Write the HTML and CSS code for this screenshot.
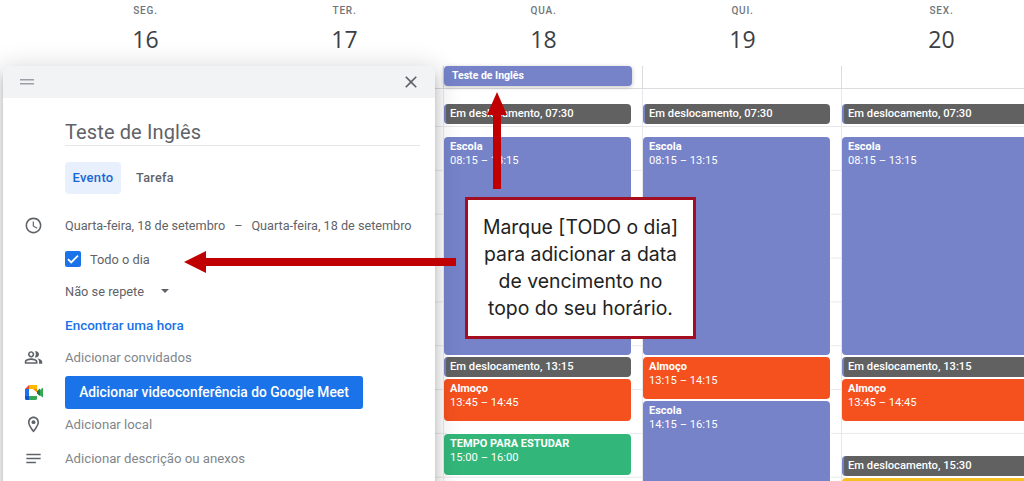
FILE: index.html
```html
<!DOCTYPE html>
<html lang="pt-BR">
<head>
    <meta charset="UTF-8">
    <meta name="viewport" content="width=device-width, initial-scale=1.0">
    <title>Teste de Inglês</title>
    <link rel="stylesheet" href="styles.css">
</head>
<body>
    <div class="calendar">
        <div class="day-heads">
            <div class="day-head"><span class="day-name">SEG.</span><span class="day-num">16</span></div>
            <div class="day-head"><span class="day-name">TER.</span><span class="day-num">17</span></div>
            <div class="day-head"><span class="day-name">QUA.</span><span class="day-num">18</span></div>
            <div class="day-head"><span class="day-name">QUI.</span><span class="day-num">19</span></div>
            <div class="day-head"><span class="day-name">SEX.</span><span class="day-num">20</span></div>
        </div>

        <div class="all-day">
            <div class="all-day-cell"></div>
            <div class="all-day-cell"></div>
            <div class="all-day-cell"><div class="all-day-event">Teste de Inglês</div></div>
            <div class="all-day-cell"></div>
            <div class="all-day-cell"></div>
        </div>

        <div class="week">
            <div class="day"></div>
            <div class="day"></div>
            <div class="day">
                <div class="event travel first">Em deslocamento, 07:30</div>
                <div class="event blue school"><b>Escola</b><span>08:15 – 13:15</span></div>
                <div class="event travel after-school">Em deslocamento, 13:15</div>
                <div class="event orange lunch-long"><b>Almoço</b><span>13:45 – 14:45</span></div>
                <div class="event green study"><b>TEMPO PARA ESTUDAR</b><span>15:00 – 16:00</span></div>
            </div>
            <div class="day">
                <div class="event travel first">Em deslocamento, 07:30</div>
                <div class="event blue school"><b>Escola</b><span>08:15 – 13:15</span></div>
                <div class="event orange lunch-short"><b>Almoço</b><span>13:15 – 14:15</span></div>
                <div class="event blue school-late"><b>Escola</b><span>14:15 – 16:15</span></div>
            </div>
            <div class="day">
                <div class="event travel first">Em deslocamento, 07:30</div>
                <div class="event blue school"><b>Escola</b><span>08:15 – 13:15</span></div>
                <div class="event travel after-school">Em deslocamento, 13:15</div>
                <div class="event orange lunch-long"><b>Almoço</b><span>13:45 – 14:45</span></div>
                <div class="event travel late">Em deslocamento, 15:30</div>
                <div class="event yellow last"></div>
            </div>
        </div>
    </div>

    <div class="dialog">
        <div class="dialog-bar">
            <svg class="drag" viewBox="0 0 14 6"><path d="M0 0h14v1.4H0zM0 4h14v1.4H0z"/></svg>
            <svg class="close" viewBox="0 0 24 24"><path d="M19 6.41L17.59 5 12 10.59 6.41 5 5 6.41 10.59 12 5 17.59 6.41 19 12 13.41 17.59 19 19 17.59 13.41 12z"/></svg>
        </div>
        <div class="dialog-body">
            <div class="title">Teste de Inglês</div>
            <div class="tabs">
                <span class="tab active">Evento</span>
                <span class="tab">Tarefa</span>
            </div>

            <div class="row date-row">
                <svg class="icon" viewBox="0 0 24 24"><path d="M11.99 2C6.47 2 2 6.48 2 12s4.47 10 9.99 10C17.52 22 22 17.52 22 12S17.52 2 11.99 2zM12 20c-4.42 0-8-3.58-8-8s3.58-8 8-8 8 3.58 8 8-3.58 8-8 8zm.5-13H11v6l5.25 3.15.75-1.23-4.5-2.67z"/></svg>
                <span class="row-text dates"><span>Quarta-feira, 18 de setembro</span><span>–</span><span>Quarta-feira, 18 de setembro</span></span>
            </div>
            <div class="row all-day-row">
                <span class="checkbox">
                    <svg viewBox="0 0 16 16"><path d="M3 8.2l3.2 3.2L13 4.6" fill="none" stroke="#fff" stroke-width="1.8"/></svg>
                </span>
                <span class="row-text">Todo o dia</span>
            </div>
            <div class="row">
                <span class="row-text">Não se repete</span>
                <span class="caret"></span>
            </div>
            <div class="row find-row"><span class="row-text link">Encontrar uma hora</span></div>
            <div class="row">
                <svg class="icon" viewBox="0 0 24 24"><path d="M16.67 13.13C18.04 14.06 19 15.32 19 17v3h4v-3c0-2.18-3.57-3.47-6.33-3.87zM15 12c2.21 0 4-1.79 4-4s-1.79-4-4-4c-.47 0-.91.1-1.33.24C14.5 5.27 15 6.58 15 8s-.5 2.73-1.33 3.76c.42.14.86.24 1.33.24zM9 12c2.21 0 4-1.79 4-4s-1.79-4-4-4-4 1.79-4 4 1.79 4 4 4zm0-6c1.1 0 2 .9 2 2s-.9 2-2 2-2-.9-2-2 .9-2 2-2zM9 13c-2.67 0-8 1.34-8 4v3h16v-3c0-2.66-5.33-4-8-4zm6 5H3v-.99C3.2 16.29 6.3 15 9 15s5.8 1.29 6 2v1z"/></svg>
                <span class="row-text muted">Adicionar convidados</span>
            </div>
            <div class="row meet-row">
                <svg class="meet" viewBox="0 0 18 15">
                    <path fill="#ea4335" d="M4 0L0 4h4z"/>
                    <path fill="#ffba00" d="M4 0h8v4H4z"/>
                    <path fill="#ff8a00" d="M8 4h4v3.5z"/>
                    <path fill="#1a73e8" d="M0 4h4v7H0z"/>
                    <path fill="#0b57d0" d="M0 11h4v4H1.5A1.5 1.5 0 0 1 0 13.5z"/>
                    <path fill="#34a853" d="M4 11h8V7.5L18 2.5v10L12 8.5V13.5A1.5 1.5 0 0 1 10.5 15H4z"/>
                    <path fill="#188038" d="M12 6l3-2.5V11l-3-2.5z"/>
                </svg>
                <span class="meet-btn">Adicionar videoconferência do Google Meet</span>
            </div>
            <div class="row local-row">
                <svg class="icon" viewBox="0 0 24 24"><path d="M12 2C8.13 2 5 5.13 5 9c0 5.25 7 13 7 13s7-7.75 7-13c0-3.87-3.13-7-7-7zM7 9c0-2.76 2.24-5 5-5s5 2.24 5 5c0 2.88-2.88 7.19-5 9.88C9.92 16.21 7 11.85 7 9z"/><circle cx="12" cy="9" r="2.5"/></svg>
                <span class="row-text muted">Adicionar local</span>
            </div>
            <div class="row desc-row">
                <svg class="icon" viewBox="0 0 24 24"><path d="M3 18h12v-2H3v2zM3 6v2h18V6H3zm0 7h18v-2H3v2z"/></svg>
                <span class="row-text muted">Adicionar descrição ou anexos</span>
            </div>
        </div>
    </div>

    <svg class="arrow arrow-up" viewBox="0 0 20 97"><path d="M10 0L20 23H14V97H6V23H0z"/></svg>
    <svg class="arrow arrow-left" viewBox="0 0 272 22"><path d="M0 11L22 0V7H272V15H22V22z"/></svg>

    <div class="note">Marque [TODO o dia]<br>para adicionar a data<br>de vencimento no<br>topo do seu horário.</div>
</body>
</html>
```

FILE: styles.css
```css
html, body {
    margin: 0;
    height: 100%;
    overflow: hidden;
}
body {
    width: 1024px;
    height: 481px;
    position: relative;
    background: #fff;
    font-family: Roboto, "Liberation Sans", sans-serif;
    color: #3c4043;
}

/* calendar */
.calendar {
    width: 1041px;
    padding-left: 46px;
    box-sizing: border-box;
}
.day-heads, .all-day, .week {
    display: grid;
    grid-template-columns: repeat(5, 199px);
}
.day-heads {
    height: 66px;
}
.day-head {
    display: flex;
    flex-direction: column;
    align-items: center;
}
.day-name {
    margin-top: 5px;
    font-size: 10px;
    line-height: 11px;
    font-weight: 500;
    letter-spacing: 0.8px;
    color: #70757a;
}
.day-num {
    margin-top: 7px;
    font-family: "Open Sans", sans-serif;
    font-size: 23px;
    line-height: 32px;
    color: #3c4043;
}
.all-day {
    height: 22px;
    border-bottom: 1px solid #dadce0;
}
.all-day-cell {
    border-left: 1px solid #dadce0;
    margin-left: -1px;
}
.all-day-event {
    width: 180px;
    height: 20px;
    margin-right: 11px;
    padding-left: 8px;
    background: #7683c9;
    border-radius: 4px;
    box-shadow: 0 1px 4px rgba(0,0,0,0.25);
    color: #fff;
    font-size: 10.5px;
    font-weight: 700;
    line-height: 19px;
}
.week {
    height: 392px;
    background: linear-gradient(to top, #e6e8eb 1px, transparent 1px) 0 -5.85px / 100% 43.85px;
}
.day {
    display: flex;
    flex-direction: column;
    height: 392px;
    overflow: hidden;
    border-left: 1px solid #e6e8eb;
    margin-left: -1px;
    padding-right: 12px;
}

/* events */
.event {
    flex: none;
    box-sizing: border-box;
    border-radius: 4px;
    padding: 3px 0 0 6px;
    color: #fff;
    font-size: 11.2px;
    line-height: 14px;
    box-shadow: 0 0 0 1px #fff;
}
.event b, .event span {
    display: block;
    white-space: nowrap;
}
.event b {
    font-weight: 700;
    font-size: 11px;
}
.blue { background: #7683c9; }
.orange { background: #f4511e; }
.green { background: #33b679; }
.yellow { background: #f6bf26; }
.travel {
    height: 20px;
    padding: 0 0 0 4px;
    background: #616161;
    border-left: 2px solid #7683c9;
    font-weight: 500;
    line-height: 20px;
}
.first { margin-top: 15px; }
.school { height: 218px; margin-top: 13px; }
.after-school { margin-top: 2px; }
.lunch-long { height: 42px; margin-top: 2px; }
.lunch-short { height: 42px; margin-top: 2px; }
.school-late { height: 90px; margin-top: 2px; }
.study { height: 41px; margin-top: 13px; }
.late { margin-top: 35px; }
.last { height: 20px; margin-top: 2px; }

/* dialog */
.dialog {
    position: absolute;
    left: 3px;
    top: 66px;
    width: 432px;
    height: 430px;
    background: #fff;
    border-radius: 8px 8px 0 0;
    box-shadow: 0 8px 10px 1px rgba(0,0,0,0.14), 0 3px 24px 4px rgba(0,0,0,0.14), 0 5px 5px -3px rgba(0,0,0,0.2);
}
.dialog-bar {
    display: flex;
    justify-content: space-between;
    align-items: center;
    height: 32px;
    padding: 0 14px 0 17px;
    background: #f1f3f4;
    border-radius: 8px 8px 0 0;
}
.drag {
    width: 14px;
    height: 6px;
    fill: #9aa0a6;
}
.close {
    width: 20px;
    height: 20px;
    fill: #5f6368;
}
.dialog-body {
    padding-left: 62px;
    padding-right: 15px;
}
.title {
    height: 48px;
    border-bottom: 1px solid #e4e6e9;
    box-sizing: border-box;
    padding-top: 21px;
    font-size: 20px;
    line-height: 26px;
    color: #5f6368;
    letter-spacing: 0.12px;
}
.tabs {
    display: flex;
    align-items: center;
    gap: 15px;
    margin-top: 16px;
    height: 32px;
}
.tab {
    margin-bottom: 2px;
    font-size: 12.6px;
    font-weight: 500;
    letter-spacing: 0.3px;
    color: #5f6368;
}
.tab.active {
    display: block;
    width: 56px;
    height: 32px;
    margin-bottom: 0;
    line-height: 32px;
    text-align: center;
    background: #e8f0fe;
    border-radius: 4px;
    color: #1967d2;
    font-size: 13px;
}
.row {
    position: relative;
    display: flex;
    align-items: center;
    height: 32px;
}
.date-row {
    margin-top: 15px;
}
.all-day-row {
    margin-top: 2px;
}
.row-text {
    font-size: 12.8px;
    color: #5f6368;
    white-space: nowrap;
}
.dates {
    display: flex;
    gap: 9px;
    font-size: 12.65px;
}
.muted {
    font-size: 13.2px;
    color: #80868b;
}
.link {
    font-size: 13.5px;
    color: #1a73e8;
    font-weight: 500;
}
.find-row {
    margin-top: 2px;
}
.icon {
    position: absolute;
    left: -41.5px;
    width: 19px;
    height: 19px;
    fill: #5f6368;
}
.checkbox {
    width: 16px;
    height: 16px;
    margin-right: 9px;
    background: #1a73e8;
    border-radius: 2px;
}
.checkbox svg {
    display: block;
}
.caret {
    width: 0;
    height: 0;
    margin-left: 17px;
    border-left: 4px solid transparent;
    border-right: 4px solid transparent;
    border-top: 4px solid #5f6368;
}
.meet-row {
    height: 33px;
    margin-top: 3px;
}
.meet {
    position: absolute;
    left: -40px;
    top: 9px;
    width: 18px;
    height: 15px;
}
.meet-btn {
    display: block;
    width: 298px;
    height: 33px;
    line-height: 32px;
    text-align: center;
    background: #1a73e8;
    border-radius: 3px;
    color: #fff;
    font-size: 13.8px;
    font-weight: 500;
}
.local-row {
    height: 30px;
}
.desc-row {
    margin-top: 3px;
}

/* annotation */
.arrow {
    position: absolute;
    fill: #c00000;
}
.arrow-up {
    left: 487px;
    top: 92px;
    width: 20px;
    height: 97px;
}
.arrow-left {
    left: 184px;
    top: 251px;
    width: 272px;
    height: 22px;
}
.note {
    position: absolute;
    left: 465px;
    top: 197px;
    width: 231px;
    height: 142px;
    box-sizing: border-box;
    border: 3px solid #a50e20;
    background: #fff;
    padding-top: 14px;
    font-family: Inter, "Noto Sans", sans-serif;
    font-size: 19.4px;
    line-height: 27px;
    text-align: center;
    color: #222;
}
```
